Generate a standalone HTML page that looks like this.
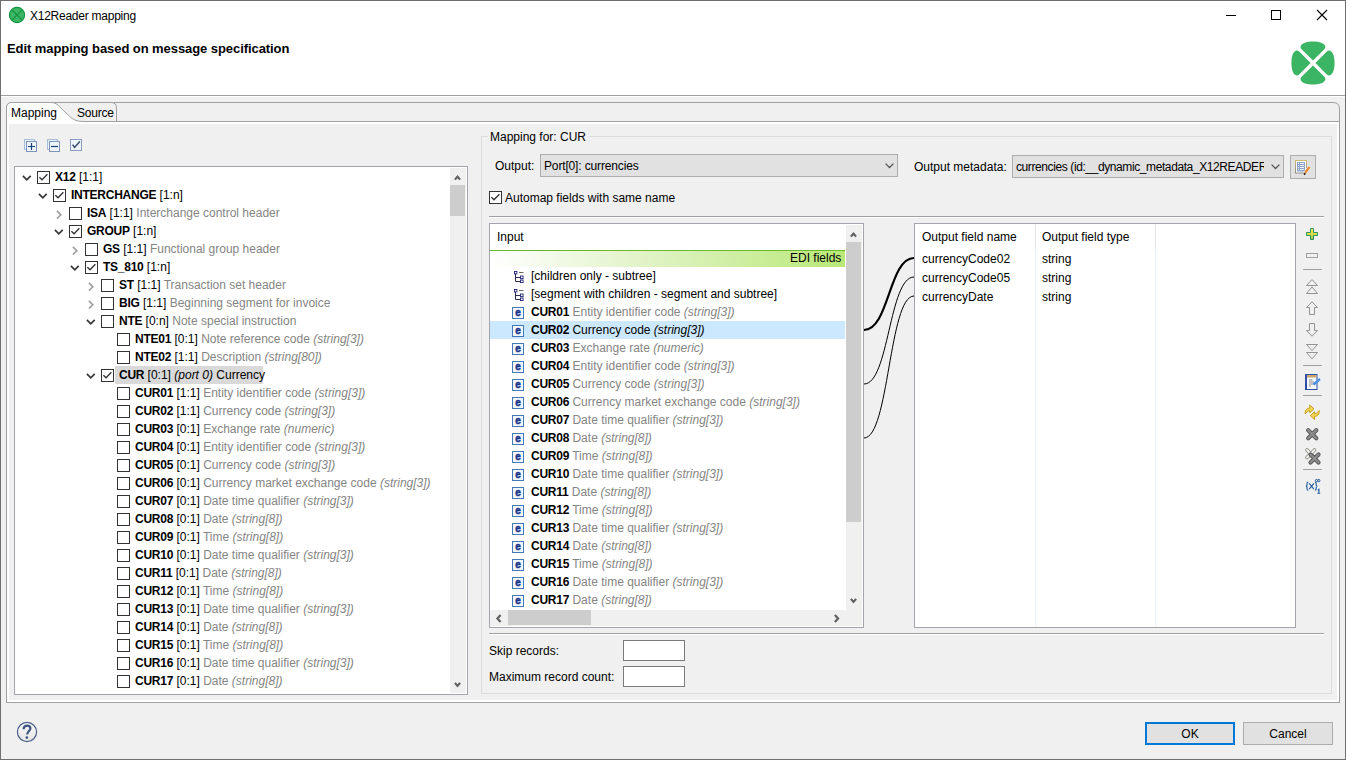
<!DOCTYPE html><html><head><meta charset="utf-8"><style>
*{margin:0;padding:0;box-sizing:border-box}
html,body{width:1346px;height:760px;overflow:hidden;background:#f0f0f0}
body{position:relative;font-family:"Liberation Sans",sans-serif;font-size:12px;color:#000}
.t{position:absolute;white-space:nowrap;line-height:18px}
.g{color:#858585}
.gi{color:#858585;font-style:italic}
b{font-weight:bold;letter-spacing:-0.25px}
svg{overflow:visible}
</style></head><body><div style="position:absolute;left:0px;top:0px;width:1346px;height:95px;background:#fff"></div>
<div style="position:absolute;left:0px;top:95px;width:1346px;height:1px;background:#a0a0a0"></div>
<div style="position:absolute;left:0px;top:96px;width:1346px;height:1px;background:#fff"></div>
<svg style="position:absolute;left:8px;top:6px;" width="18" height="18" viewBox="0 0 18 18"><circle cx="9" cy="9" r="7.6" fill="#3cb664" stroke="#14933f" stroke-width="1.2"/><path d="M4,4 L14,14 M14,4 L4,14" stroke="#14933f" stroke-width="1.1"/></svg>
<div class="t" style="left:30px;top:7px;font-size:12px;letter-spacing:-0.25px">X12Reader mapping</div>
<div style="position:absolute;left:1226px;top:15px;width:10px;height:1px;background:#000"></div>
<div style="position:absolute;left:1271px;top:10px;width:10px;height:10px;border:1px solid #000"></div>
<svg style="position:absolute;left:1316px;top:9px;" width="12" height="12" viewBox="0 0 12 12"><path d="M1,1 L11,11 M11,1 L1,11" stroke="#000" stroke-width="1.1"/></svg>
<div class="t" style="left:7px;top:40px;font-size:13px;letter-spacing:-0.07px;font-weight:bold">Edit mapping based on message specification</div>
<svg style="position:absolute;left:1291px;top:41px;" width="44" height="44" viewBox="0 0 44 44"><path d="M22,19.6 L10.6,8.2 C8.2,5.8 9.5,0.6 22,0.4 C34.5,0.6 35.8,5.8 33.4,8.2 Z" transform="rotate(0 22 22)" fill="#3bb563"/><path d="M22,19.6 L10.6,8.2 C8.2,5.8 9.5,0.6 22,0.4 C34.5,0.6 35.8,5.8 33.4,8.2 Z" transform="rotate(90 22 22)" fill="#3bb563"/><path d="M22,19.6 L10.6,8.2 C8.2,5.8 9.5,0.6 22,0.4 C34.5,0.6 35.8,5.8 33.4,8.2 Z" transform="rotate(180 22 22)" fill="#3bb563"/><path d="M22,19.6 L10.6,8.2 C8.2,5.8 9.5,0.6 22,0.4 C34.5,0.6 35.8,5.8 33.4,8.2 Z" transform="rotate(270 22 22)" fill="#3bb563"/></svg>
<div style="position:absolute;left:6px;top:121px;width:1334px;height:582px;border:1px solid #a0a0a0;border-top:none"></div>
<div style="position:absolute;left:7px;top:121px;width:1332px;height:581px;border:2px solid #fff;border-top:none"></div>
<div style="position:absolute;left:6px;top:121px;width:1334px;height:1px;background:#a0a0a0"></div>
<div style="position:absolute;left:7px;top:122px;width:1332px;height:2px;background:#fff"></div>
<svg style="position:absolute;left:110px;top:102px;" width="1230" height="21" viewBox="0 0 1230 21"><path d="M0,0.5 H1223 Q1229.5,0.5 1229.5,7 V20" fill="none" stroke="#a0a0a0"/></svg>
<svg style="position:absolute;left:6px;top:102px;" width="120" height="22" viewBox="0 0 120 22"><path d="M0.5,20 L0.5,6 Q0.5,0.5 6,0.5 L105,0.5 Q110.5,0.5 110.5,6 L110.5,20" fill="#f0f0f0" stroke="#a0a0a0"/><path d="M0.5,21 L0.5,6 Q0.5,0.5 6,0.5 L45,0.5 C48,0.5 49.5,1.2 52,3.2 L62,12.8 C66,16.8 69,19.5 76,19.5 L76,21 Z" fill="#fff"/><path d="M0.5,21 L0.5,6 Q0.5,0.5 6,0.5 L45,0.5 C48,0.5 49.5,1.2 52,3.2 L62,12.8 C66,16.8 69,19.5 78,19.5" fill="none" stroke="#a0a0a0"/></svg>
<div style="position:absolute;left:82px;top:121px;width:1258px;height:1px;background:#a0a0a0"></div>
<div style="position:absolute;left:7px;top:122px;width:1332px;height:2px;background:#fff"></div>
<div class="t" style="left:11px;top:104px;font-size:12px;">Mapping</div>
<div class="t" style="left:77px;top:104px;font-size:12px;letter-spacing:-0.2px">Source</div>
<svg style="position:absolute;left:24px;top:139px;" width="14" height="14" viewBox="0 0 14 14"><rect x="0.5" y="0.5" width="10" height="10" fill="#e6f2fb" stroke="#a9bbd6"/><rect x="2.5" y="2.5" width="10" height="10" fill="#eef6fc" stroke="#7f93b8"/><path d="M4,7.5 H11 M7.5,4 V11" stroke="#15407a" stroke-width="1.2"/></svg>
<svg style="position:absolute;left:47px;top:139px;" width="14" height="14" viewBox="0 0 14 14"><rect x="0.5" y="0.5" width="10" height="10" fill="#e6f2fb" stroke="#a9bbd6"/><rect x="2.5" y="2.5" width="10" height="10" fill="#eef6fc" stroke="#7f93b8"/><path d="M4,7.5 H11" stroke="#15407a" stroke-width="1.2"/></svg>
<svg style="position:absolute;left:70px;top:139px;" width="13" height="13" viewBox="0 0 13 13"><rect x="0.5" y="0.5" width="11" height="11" fill="#eef6fc" stroke="#8a9cbd"/><path d="M2.6,5.6 L4.6,8.4 L9.8,2.6" fill="none" stroke="#34496e" stroke-width="1.5"/></svg>
<div style="position:absolute;left:14px;top:166px;width:454px;height:529px;background:#fff;border:1px solid #a4a4ac"></div>
<div style="position:absolute;left:450px;top:168px;width:16px;height:525px;background:#f0f0f0"></div>
<div style="position:absolute;left:450px;top:185px;width:15px;height:31px;background:#cdcdcd"></div>
<svg style="position:absolute;left:454px;top:174px;" width="7" height="7" viewBox="0 0 7 7"><path d="M0.9,5.6 L3.5,2.6 L6.1,5.6" fill="none" stroke="#606060" stroke-width="2.2"/></svg>
<svg style="position:absolute;left:454px;top:682px;" width="7" height="7" viewBox="0 0 7 7"><path d="M0.9,0.9 L3.5,3.9 L6.1,0.9" fill="none" stroke="#606060" stroke-width="2.2"/></svg>
<svg style="position:absolute;left:22px;top:175px;" width="10" height="7" viewBox="0 0 10 7"><path d="M0.9,0.9 L4.8,4.8 L8.7,0.9" fill="none" stroke="#3a3a3a" stroke-width="1.8"/></svg>
<svg style="position:absolute;left:37px;top:171px;" width="13" height="13" viewBox="0 0 13 13"><rect x="0.5" y="0.5" width="12" height="12" fill="#fff" stroke="#333" /><path d="M2.4,6.2 L5,8.8 L10.4,3.2" fill="none" stroke="#333" stroke-width="1.3"/></svg>
<div class="t" style="left:55px;top:168px;font-size:12px;"><b>X12</b> [1:1]</div>
<svg style="position:absolute;left:38px;top:193px;" width="10" height="7" viewBox="0 0 10 7"><path d="M0.9,0.9 L4.8,4.8 L8.7,0.9" fill="none" stroke="#3a3a3a" stroke-width="1.8"/></svg>
<svg style="position:absolute;left:53px;top:189px;" width="13" height="13" viewBox="0 0 13 13"><rect x="0.5" y="0.5" width="12" height="12" fill="#fff" stroke="#333" /><path d="M2.4,6.2 L5,8.8 L10.4,3.2" fill="none" stroke="#333" stroke-width="1.3"/></svg>
<div class="t" style="left:71px;top:186px;font-size:12px;"><b>INTERCHANGE</b> [1:n]</div>
<svg style="position:absolute;left:56px;top:210px;" width="7" height="10" viewBox="0 0 7 10"><path d="M0.9,0.9 L4.8,4.8 L0.9,8.7" fill="none" stroke="#a6a6a6" stroke-width="1.8"/></svg>
<svg style="position:absolute;left:69px;top:207px;" width="13" height="13" viewBox="0 0 13 13"><rect x="0.5" y="0.5" width="12" height="12" fill="#fff" stroke="#333" /></svg>
<div class="t" style="left:87px;top:204px;font-size:12px;"><b>ISA</b> [1:1] <span class="g">Interchange control header</span></div>
<svg style="position:absolute;left:54px;top:229px;" width="10" height="7" viewBox="0 0 10 7"><path d="M0.9,0.9 L4.8,4.8 L8.7,0.9" fill="none" stroke="#3a3a3a" stroke-width="1.8"/></svg>
<svg style="position:absolute;left:69px;top:225px;" width="13" height="13" viewBox="0 0 13 13"><rect x="0.5" y="0.5" width="12" height="12" fill="#fff" stroke="#333" /><path d="M2.4,6.2 L5,8.8 L10.4,3.2" fill="none" stroke="#333" stroke-width="1.3"/></svg>
<div class="t" style="left:87px;top:222px;font-size:12px;"><b>GROUP</b> [1:n]</div>
<svg style="position:absolute;left:72px;top:246px;" width="7" height="10" viewBox="0 0 7 10"><path d="M0.9,0.9 L4.8,4.8 L0.9,8.7" fill="none" stroke="#a6a6a6" stroke-width="1.8"/></svg>
<svg style="position:absolute;left:85px;top:243px;" width="13" height="13" viewBox="0 0 13 13"><rect x="0.5" y="0.5" width="12" height="12" fill="#fff" stroke="#333" /></svg>
<div class="t" style="left:103px;top:240px;font-size:12px;"><b>GS</b> [1:1] <span class="g">Functional group header</span></div>
<svg style="position:absolute;left:70px;top:265px;" width="10" height="7" viewBox="0 0 10 7"><path d="M0.9,0.9 L4.8,4.8 L8.7,0.9" fill="none" stroke="#3a3a3a" stroke-width="1.8"/></svg>
<svg style="position:absolute;left:85px;top:261px;" width="13" height="13" viewBox="0 0 13 13"><rect x="0.5" y="0.5" width="12" height="12" fill="#fff" stroke="#333" /><path d="M2.4,6.2 L5,8.8 L10.4,3.2" fill="none" stroke="#333" stroke-width="1.3"/></svg>
<div class="t" style="left:103px;top:258px;font-size:12px;"><b>TS_810</b> [1:n]</div>
<svg style="position:absolute;left:88px;top:282px;" width="7" height="10" viewBox="0 0 7 10"><path d="M0.9,0.9 L4.8,4.8 L0.9,8.7" fill="none" stroke="#a6a6a6" stroke-width="1.8"/></svg>
<svg style="position:absolute;left:101px;top:279px;" width="13" height="13" viewBox="0 0 13 13"><rect x="0.5" y="0.5" width="12" height="12" fill="#fff" stroke="#333" /></svg>
<div class="t" style="left:119px;top:276px;font-size:12px;"><b>ST</b> [1:1] <span class="g">Transaction set header</span></div>
<svg style="position:absolute;left:88px;top:300px;" width="7" height="10" viewBox="0 0 7 10"><path d="M0.9,0.9 L4.8,4.8 L0.9,8.7" fill="none" stroke="#a6a6a6" stroke-width="1.8"/></svg>
<svg style="position:absolute;left:101px;top:297px;" width="13" height="13" viewBox="0 0 13 13"><rect x="0.5" y="0.5" width="12" height="12" fill="#fff" stroke="#333" /></svg>
<div class="t" style="left:119px;top:294px;font-size:12px;"><b>BIG</b> [1:1] <span class="g">Beginning segment for invoice</span></div>
<svg style="position:absolute;left:86px;top:319px;" width="10" height="7" viewBox="0 0 10 7"><path d="M0.9,0.9 L4.8,4.8 L8.7,0.9" fill="none" stroke="#3a3a3a" stroke-width="1.8"/></svg>
<svg style="position:absolute;left:101px;top:315px;" width="13" height="13" viewBox="0 0 13 13"><rect x="0.5" y="0.5" width="12" height="12" fill="#fff" stroke="#333" /></svg>
<div class="t" style="left:119px;top:312px;font-size:12px;"><b>NTE</b> [0:n] <span class="g">Note special instruction</span></div>
<svg style="position:absolute;left:117px;top:333px;" width="13" height="13" viewBox="0 0 13 13"><rect x="0.5" y="0.5" width="12" height="12" fill="#fff" stroke="#333" /></svg>
<div class="t" style="left:135px;top:330px;font-size:12px;"><b>NTE01</b> [0:1] <span class="g">Note reference code <i>(string[3])</i></span></div>
<svg style="position:absolute;left:117px;top:351px;" width="13" height="13" viewBox="0 0 13 13"><rect x="0.5" y="0.5" width="12" height="12" fill="#fff" stroke="#333" /></svg>
<div class="t" style="left:135px;top:348px;font-size:12px;"><b>NTE02</b> [1:1] <span class="g">Description <i>(string[80])</i></span></div>
<div style="position:absolute;left:115px;top:366px;width:148px;height:18px;background:#d9d9d9"></div>
<svg style="position:absolute;left:86px;top:373px;" width="10" height="7" viewBox="0 0 10 7"><path d="M0.9,0.9 L4.8,4.8 L8.7,0.9" fill="none" stroke="#3a3a3a" stroke-width="1.8"/></svg>
<svg style="position:absolute;left:101px;top:369px;" width="13" height="13" viewBox="0 0 13 13"><rect x="0.5" y="0.5" width="12" height="12" fill="#fff" stroke="#333" /><path d="M2.4,6.2 L5,8.8 L10.4,3.2" fill="none" stroke="#333" stroke-width="1.3"/></svg>
<div class="t" style="left:119px;top:366px;font-size:12px;"><b>CUR</b> [0:1] <i>(port 0)</i> Currency</div>
<svg style="position:absolute;left:117px;top:387px;" width="13" height="13" viewBox="0 0 13 13"><rect x="0.5" y="0.5" width="12" height="12" fill="#fff" stroke="#333" /></svg>
<div class="t" style="left:135px;top:384px;font-size:12px;"><b>CUR01</b> [1:1] <span class="g">Entity identifier code <i>(string[3])</i></span></div>
<svg style="position:absolute;left:117px;top:405px;" width="13" height="13" viewBox="0 0 13 13"><rect x="0.5" y="0.5" width="12" height="12" fill="#fff" stroke="#333" /></svg>
<div class="t" style="left:135px;top:402px;font-size:12px;"><b>CUR02</b> [1:1] <span class="g">Currency code <i>(string[3])</i></span></div>
<svg style="position:absolute;left:117px;top:423px;" width="13" height="13" viewBox="0 0 13 13"><rect x="0.5" y="0.5" width="12" height="12" fill="#fff" stroke="#333" /></svg>
<div class="t" style="left:135px;top:420px;font-size:12px;"><b>CUR03</b> [0:1] <span class="g">Exchange rate <i>(numeric)</i></span></div>
<svg style="position:absolute;left:117px;top:441px;" width="13" height="13" viewBox="0 0 13 13"><rect x="0.5" y="0.5" width="12" height="12" fill="#fff" stroke="#333" /></svg>
<div class="t" style="left:135px;top:438px;font-size:12px;"><b>CUR04</b> [0:1] <span class="g">Entity identifier code <i>(string[3])</i></span></div>
<svg style="position:absolute;left:117px;top:459px;" width="13" height="13" viewBox="0 0 13 13"><rect x="0.5" y="0.5" width="12" height="12" fill="#fff" stroke="#333" /></svg>
<div class="t" style="left:135px;top:456px;font-size:12px;"><b>CUR05</b> [0:1] <span class="g">Currency code <i>(string[3])</i></span></div>
<svg style="position:absolute;left:117px;top:477px;" width="13" height="13" viewBox="0 0 13 13"><rect x="0.5" y="0.5" width="12" height="12" fill="#fff" stroke="#333" /></svg>
<div class="t" style="left:135px;top:474px;font-size:12px;"><b>CUR06</b> [0:1] <span class="g">Currency market exchange code <i>(string[3])</i></span></div>
<svg style="position:absolute;left:117px;top:495px;" width="13" height="13" viewBox="0 0 13 13"><rect x="0.5" y="0.5" width="12" height="12" fill="#fff" stroke="#333" /></svg>
<div class="t" style="left:135px;top:492px;font-size:12px;"><b>CUR07</b> [0:1] <span class="g">Date time qualifier <i>(string[3])</i></span></div>
<svg style="position:absolute;left:117px;top:513px;" width="13" height="13" viewBox="0 0 13 13"><rect x="0.5" y="0.5" width="12" height="12" fill="#fff" stroke="#333" /></svg>
<div class="t" style="left:135px;top:510px;font-size:12px;"><b>CUR08</b> [0:1] <span class="g">Date <i>(string[8])</i></span></div>
<svg style="position:absolute;left:117px;top:531px;" width="13" height="13" viewBox="0 0 13 13"><rect x="0.5" y="0.5" width="12" height="12" fill="#fff" stroke="#333" /></svg>
<div class="t" style="left:135px;top:528px;font-size:12px;"><b>CUR09</b> [0:1] <span class="g">Time <i>(string[8])</i></span></div>
<svg style="position:absolute;left:117px;top:549px;" width="13" height="13" viewBox="0 0 13 13"><rect x="0.5" y="0.5" width="12" height="12" fill="#fff" stroke="#333" /></svg>
<div class="t" style="left:135px;top:546px;font-size:12px;"><b>CUR10</b> [0:1] <span class="g">Date time qualifier <i>(string[3])</i></span></div>
<svg style="position:absolute;left:117px;top:567px;" width="13" height="13" viewBox="0 0 13 13"><rect x="0.5" y="0.5" width="12" height="12" fill="#fff" stroke="#333" /></svg>
<div class="t" style="left:135px;top:564px;font-size:12px;"><b>CUR11</b> [0:1] <span class="g">Date <i>(string[8])</i></span></div>
<svg style="position:absolute;left:117px;top:585px;" width="13" height="13" viewBox="0 0 13 13"><rect x="0.5" y="0.5" width="12" height="12" fill="#fff" stroke="#333" /></svg>
<div class="t" style="left:135px;top:582px;font-size:12px;"><b>CUR12</b> [0:1] <span class="g">Time <i>(string[8])</i></span></div>
<svg style="position:absolute;left:117px;top:603px;" width="13" height="13" viewBox="0 0 13 13"><rect x="0.5" y="0.5" width="12" height="12" fill="#fff" stroke="#333" /></svg>
<div class="t" style="left:135px;top:600px;font-size:12px;"><b>CUR13</b> [0:1] <span class="g">Date time qualifier <i>(string[3])</i></span></div>
<svg style="position:absolute;left:117px;top:621px;" width="13" height="13" viewBox="0 0 13 13"><rect x="0.5" y="0.5" width="12" height="12" fill="#fff" stroke="#333" /></svg>
<div class="t" style="left:135px;top:618px;font-size:12px;"><b>CUR14</b> [0:1] <span class="g">Date <i>(string[8])</i></span></div>
<svg style="position:absolute;left:117px;top:639px;" width="13" height="13" viewBox="0 0 13 13"><rect x="0.5" y="0.5" width="12" height="12" fill="#fff" stroke="#333" /></svg>
<div class="t" style="left:135px;top:636px;font-size:12px;"><b>CUR15</b> [0:1] <span class="g">Time <i>(string[8])</i></span></div>
<svg style="position:absolute;left:117px;top:657px;" width="13" height="13" viewBox="0 0 13 13"><rect x="0.5" y="0.5" width="12" height="12" fill="#fff" stroke="#333" /></svg>
<div class="t" style="left:135px;top:654px;font-size:12px;"><b>CUR16</b> [0:1] <span class="g">Date time qualifier <i>(string[3])</i></span></div>
<svg style="position:absolute;left:117px;top:675px;" width="13" height="13" viewBox="0 0 13 13"><rect x="0.5" y="0.5" width="12" height="12" fill="#fff" stroke="#333" /></svg>
<div class="t" style="left:135px;top:672px;font-size:12px;"><b>CUR17</b> [0:1] <span class="g">Date <i>(string[8])</i></span></div>
<div style="position:absolute;left:481px;top:136px;width:851px;height:558px;border:1px solid #dcdcdc"></div>
<div style="position:absolute;left:488px;top:130px;width:101px;height:14px;background:#f0f0f0"></div>
<div class="t" style="left:490px;top:128px;font-size:12px;">Mapping for: CUR</div>
<div class="t" style="left:495px;top:157px;font-size:12px;">Output:</div>
<div style="position:absolute;left:540px;top:154px;width:358px;height:23px;background:#e1e1e1;border:1px solid #adadad;overflow:hidden"></div>
<div class="t" style="left:544px;top:157px;font-size:12px;width:334px;overflow:hidden;letter-spacing:-0.15px">Port[0]: currencies</div>
<svg style="position:absolute;left:885px;top:163px;" width="10" height="6" viewBox="0 0 10 6"><path d="M0.6,0.6 L4.5,4.5 L8.4,0.6" fill="none" stroke="#555" stroke-width="1.3"/></svg>
<div class="t" style="left:914px;top:158px;font-size:12px;">Output metadata:</div>
<div style="position:absolute;left:1012px;top:155px;width:272px;height:23px;background:#e1e1e1;border:1px solid #adadad;overflow:hidden"></div>
<div class="t" style="left:1016px;top:158px;font-size:12px;width:248px;overflow:hidden;letter-spacing:-0.4px">currencies (id:__dynamic_metadata_X12READER</div>
<svg style="position:absolute;left:1271px;top:164px;" width="10" height="6" viewBox="0 0 10 6"><path d="M0.6,0.6 L4.5,4.5 L8.4,0.6" fill="none" stroke="#555" stroke-width="1.3"/></svg>
<div style="position:absolute;left:1290px;top:155px;width:26px;height:24px;background:#e1e1e1;border:1px solid #adadad"></div>
<svg style="position:absolute;left:1295px;top:160px;" width="16" height="15" viewBox="0 0 16 15"><defs><linearGradient id="dg" x1="0" y1="0" x2="0" y2="1"><stop offset="0" stop-color="#cdb874"/><stop offset="1" stop-color="#8c8c84"/></linearGradient></defs><rect x="0.5" y="0.5" width="11" height="12.5" fill="#fff" stroke="url(#dg)"/><rect x="2" y="2" width="8" height="9.5" fill="#8ea3cc"/><path d="M3,3.5 H4 M5,3.5 H9 M3,5.5 H4 M5,5.5 H9 M3,7.5 H4 M5,7.5 H9 M3,9.5 H4 M5,9.5 H9" stroke="#f4f6fb" stroke-width="1"/><path d="M10,13 L14.5,7" stroke="#fff" stroke-width="3.6"/><path d="M10,13 L14.5,7" stroke="#e08a3a" stroke-width="2.4"/><circle cx="9.6" cy="14" r="0.9" fill="#111"/></svg>
<svg style="position:absolute;left:489px;top:191px;" width="13" height="13" viewBox="0 0 13 13"><rect x="0.5" y="0.5" width="12" height="12" fill="#fff" stroke="#333" /><path d="M2.4,6.2 L5,8.8 L10.4,3.2" fill="none" stroke="#333" stroke-width="1.3"/></svg>
<div class="t" style="left:505px;top:189px;font-size:12px;">Automap fields with same name</div>
<div style="position:absolute;left:489px;top:216px;width:835px;height:1px;background:#a0a0a0"></div>
<div style="position:absolute;left:489px;top:217px;width:835px;height:1px;background:#fff"></div>
<div style="position:absolute;left:489px;top:223px;width:375px;height:405px;background:#fff;border:1px solid #a4a4ac"></div>
<div class="t" style="left:497px;top:228px;font-size:12px;">Input</div>
<div style="position:absolute;left:490px;top:250px;width:355px;height:17px;background:linear-gradient(to right,#fff 0%,#e3f4cb 40%,#b9e877 100%);border-top:1px solid #6db92e"></div>
<div class="t" style="left:790px;top:249px;font-size:12px;width:51px;text-align:right">EDI fields</div>
<div style="position:absolute;left:846px;top:225px;width:16px;height:385px;background:#f0f0f0"></div>
<div style="position:absolute;left:846px;top:242px;width:15px;height:280px;background:#cdcdcd"></div>
<svg style="position:absolute;left:850px;top:231px;" width="7" height="7" viewBox="0 0 7 7"><path d="M0.9,5.6 L3.5,2.6 L6.1,5.6" fill="none" stroke="#606060" stroke-width="2.2"/></svg>
<svg style="position:absolute;left:850px;top:598px;" width="7" height="7" viewBox="0 0 7 7"><path d="M0.9,0.9 L3.5,3.9 L6.1,0.9" fill="none" stroke="#606060" stroke-width="2.2"/></svg>
<div style="position:absolute;left:490px;top:610px;width:372px;height:16px;background:#f0f0f0"></div>
<div style="position:absolute;left:508px;top:610px;width:83px;height:15px;background:#cdcdcd"></div>
<svg style="position:absolute;left:495px;top:614px;" width="7" height="9" viewBox="0 0 7 9"><path d="M5.6,0.9 L2.4,4.5 L5.6,8.1" fill="none" stroke="#606060" stroke-width="2.2"/></svg>
<svg style="position:absolute;left:834px;top:614px;" width="7" height="9" viewBox="0 0 7 9"><path d="M0.9,0.9 L4.1,4.5 L0.9,8.1" fill="none" stroke="#606060" stroke-width="2.2"/></svg>
<svg style="position:absolute;left:514px;top:271px;" width="11" height="12" viewBox="0 0 11 12"><path d="M1.5,3 V10.5 H6 M1.5,6.5 H6" fill="none" stroke="#2a2a55" stroke-width="1"/><rect x="0.5" y="0.5" width="2.4" height="2.4" fill="#fff" stroke="#23237a" stroke-width="0.9"/><rect x="6.5" y="5" width="2.6" height="2.6" fill="#fff" stroke="#23237a" stroke-width="0.9"/><rect x="6.5" y="9" width="2.6" height="2.6" fill="#fff" stroke="#23237a" stroke-width="0.9"/><path d="M5,1.5 H9.5" stroke="#555" stroke-width="0.9"/></svg>
<div class="t" style="left:531px;top:267px;font-size:12px;">[children only - subtree]</div>
<svg style="position:absolute;left:514px;top:289px;" width="11" height="12" viewBox="0 0 11 12"><path d="M1.5,3 V10.5 H6 M1.5,6.5 H6" fill="none" stroke="#2a2a55" stroke-width="1"/><rect x="0.5" y="0.5" width="2.4" height="2.4" fill="#fff" stroke="#23237a" stroke-width="0.9"/><rect x="6.5" y="5" width="2.6" height="2.6" fill="#fff" stroke="#23237a" stroke-width="0.9"/><rect x="6.5" y="9" width="2.6" height="2.6" fill="#fff" stroke="#23237a" stroke-width="0.9"/><path d="M5,1.5 H9.5" stroke="#555" stroke-width="0.9"/></svg>
<div class="t" style="left:531px;top:285px;font-size:12px;">[segment with children - segment and subtree]</div>
<svg style="position:absolute;left:512px;top:307px;" width="12" height="12" viewBox="0 0 12 12"><rect x="0.5" y="0.5" width="11" height="11" fill="#f2f7fd" stroke="#4479b8"/><text x="6.1" y="8.9" text-anchor="middle" font-family="Liberation Sans" font-weight="700" font-size="10" fill="#18398a" stroke="#18398a" stroke-width="0.5">e</text></svg>
<div class="t" style="left:531px;top:303px;font-size:12px;"><b>CUR01</b> <span class="g">Entity identifier code <i>(string[3])</i></span></div>
<div style="position:absolute;left:490px;top:321px;width:355px;height:18px;background:#cce8ff"></div>
<svg style="position:absolute;left:512px;top:325px;" width="12" height="12" viewBox="0 0 12 12"><rect x="0.5" y="0.5" width="11" height="11" fill="#f2f7fd" stroke="#4479b8"/><text x="6.1" y="8.9" text-anchor="middle" font-family="Liberation Sans" font-weight="700" font-size="10" fill="#18398a" stroke="#18398a" stroke-width="0.5">e</text></svg>
<div class="t" style="left:531px;top:321px;font-size:12px;"><b>CUR02</b> <span>Currency code <i>(string[3])</i></span></div>
<svg style="position:absolute;left:512px;top:343px;" width="12" height="12" viewBox="0 0 12 12"><rect x="0.5" y="0.5" width="11" height="11" fill="#f2f7fd" stroke="#4479b8"/><text x="6.1" y="8.9" text-anchor="middle" font-family="Liberation Sans" font-weight="700" font-size="10" fill="#18398a" stroke="#18398a" stroke-width="0.5">e</text></svg>
<div class="t" style="left:531px;top:339px;font-size:12px;"><b>CUR03</b> <span class="g">Exchange rate <i>(numeric)</i></span></div>
<svg style="position:absolute;left:512px;top:361px;" width="12" height="12" viewBox="0 0 12 12"><rect x="0.5" y="0.5" width="11" height="11" fill="#f2f7fd" stroke="#4479b8"/><text x="6.1" y="8.9" text-anchor="middle" font-family="Liberation Sans" font-weight="700" font-size="10" fill="#18398a" stroke="#18398a" stroke-width="0.5">e</text></svg>
<div class="t" style="left:531px;top:357px;font-size:12px;"><b>CUR04</b> <span class="g">Entity identifier code <i>(string[3])</i></span></div>
<svg style="position:absolute;left:512px;top:379px;" width="12" height="12" viewBox="0 0 12 12"><rect x="0.5" y="0.5" width="11" height="11" fill="#f2f7fd" stroke="#4479b8"/><text x="6.1" y="8.9" text-anchor="middle" font-family="Liberation Sans" font-weight="700" font-size="10" fill="#18398a" stroke="#18398a" stroke-width="0.5">e</text></svg>
<div class="t" style="left:531px;top:375px;font-size:12px;"><b>CUR05</b> <span class="g">Currency code <i>(string[3])</i></span></div>
<svg style="position:absolute;left:512px;top:397px;" width="12" height="12" viewBox="0 0 12 12"><rect x="0.5" y="0.5" width="11" height="11" fill="#f2f7fd" stroke="#4479b8"/><text x="6.1" y="8.9" text-anchor="middle" font-family="Liberation Sans" font-weight="700" font-size="10" fill="#18398a" stroke="#18398a" stroke-width="0.5">e</text></svg>
<div class="t" style="left:531px;top:393px;font-size:12px;"><b>CUR06</b> <span class="g">Currency market exchange code <i>(string[3])</i></span></div>
<svg style="position:absolute;left:512px;top:415px;" width="12" height="12" viewBox="0 0 12 12"><rect x="0.5" y="0.5" width="11" height="11" fill="#f2f7fd" stroke="#4479b8"/><text x="6.1" y="8.9" text-anchor="middle" font-family="Liberation Sans" font-weight="700" font-size="10" fill="#18398a" stroke="#18398a" stroke-width="0.5">e</text></svg>
<div class="t" style="left:531px;top:411px;font-size:12px;"><b>CUR07</b> <span class="g">Date time qualifier <i>(string[3])</i></span></div>
<svg style="position:absolute;left:512px;top:433px;" width="12" height="12" viewBox="0 0 12 12"><rect x="0.5" y="0.5" width="11" height="11" fill="#f2f7fd" stroke="#4479b8"/><text x="6.1" y="8.9" text-anchor="middle" font-family="Liberation Sans" font-weight="700" font-size="10" fill="#18398a" stroke="#18398a" stroke-width="0.5">e</text></svg>
<div class="t" style="left:531px;top:429px;font-size:12px;"><b>CUR08</b> <span class="g">Date <i>(string[8])</i></span></div>
<svg style="position:absolute;left:512px;top:451px;" width="12" height="12" viewBox="0 0 12 12"><rect x="0.5" y="0.5" width="11" height="11" fill="#f2f7fd" stroke="#4479b8"/><text x="6.1" y="8.9" text-anchor="middle" font-family="Liberation Sans" font-weight="700" font-size="10" fill="#18398a" stroke="#18398a" stroke-width="0.5">e</text></svg>
<div class="t" style="left:531px;top:447px;font-size:12px;"><b>CUR09</b> <span class="g">Time <i>(string[8])</i></span></div>
<svg style="position:absolute;left:512px;top:469px;" width="12" height="12" viewBox="0 0 12 12"><rect x="0.5" y="0.5" width="11" height="11" fill="#f2f7fd" stroke="#4479b8"/><text x="6.1" y="8.9" text-anchor="middle" font-family="Liberation Sans" font-weight="700" font-size="10" fill="#18398a" stroke="#18398a" stroke-width="0.5">e</text></svg>
<div class="t" style="left:531px;top:465px;font-size:12px;"><b>CUR10</b> <span class="g">Date time qualifier <i>(string[3])</i></span></div>
<svg style="position:absolute;left:512px;top:487px;" width="12" height="12" viewBox="0 0 12 12"><rect x="0.5" y="0.5" width="11" height="11" fill="#f2f7fd" stroke="#4479b8"/><text x="6.1" y="8.9" text-anchor="middle" font-family="Liberation Sans" font-weight="700" font-size="10" fill="#18398a" stroke="#18398a" stroke-width="0.5">e</text></svg>
<div class="t" style="left:531px;top:483px;font-size:12px;"><b>CUR11</b> <span class="g">Date <i>(string[8])</i></span></div>
<svg style="position:absolute;left:512px;top:505px;" width="12" height="12" viewBox="0 0 12 12"><rect x="0.5" y="0.5" width="11" height="11" fill="#f2f7fd" stroke="#4479b8"/><text x="6.1" y="8.9" text-anchor="middle" font-family="Liberation Sans" font-weight="700" font-size="10" fill="#18398a" stroke="#18398a" stroke-width="0.5">e</text></svg>
<div class="t" style="left:531px;top:501px;font-size:12px;"><b>CUR12</b> <span class="g">Time <i>(string[8])</i></span></div>
<svg style="position:absolute;left:512px;top:523px;" width="12" height="12" viewBox="0 0 12 12"><rect x="0.5" y="0.5" width="11" height="11" fill="#f2f7fd" stroke="#4479b8"/><text x="6.1" y="8.9" text-anchor="middle" font-family="Liberation Sans" font-weight="700" font-size="10" fill="#18398a" stroke="#18398a" stroke-width="0.5">e</text></svg>
<div class="t" style="left:531px;top:519px;font-size:12px;"><b>CUR13</b> <span class="g">Date time qualifier <i>(string[3])</i></span></div>
<svg style="position:absolute;left:512px;top:541px;" width="12" height="12" viewBox="0 0 12 12"><rect x="0.5" y="0.5" width="11" height="11" fill="#f2f7fd" stroke="#4479b8"/><text x="6.1" y="8.9" text-anchor="middle" font-family="Liberation Sans" font-weight="700" font-size="10" fill="#18398a" stroke="#18398a" stroke-width="0.5">e</text></svg>
<div class="t" style="left:531px;top:537px;font-size:12px;"><b>CUR14</b> <span class="g">Date <i>(string[8])</i></span></div>
<svg style="position:absolute;left:512px;top:559px;" width="12" height="12" viewBox="0 0 12 12"><rect x="0.5" y="0.5" width="11" height="11" fill="#f2f7fd" stroke="#4479b8"/><text x="6.1" y="8.9" text-anchor="middle" font-family="Liberation Sans" font-weight="700" font-size="10" fill="#18398a" stroke="#18398a" stroke-width="0.5">e</text></svg>
<div class="t" style="left:531px;top:555px;font-size:12px;"><b>CUR15</b> <span class="g">Time <i>(string[8])</i></span></div>
<svg style="position:absolute;left:512px;top:577px;" width="12" height="12" viewBox="0 0 12 12"><rect x="0.5" y="0.5" width="11" height="11" fill="#f2f7fd" stroke="#4479b8"/><text x="6.1" y="8.9" text-anchor="middle" font-family="Liberation Sans" font-weight="700" font-size="10" fill="#18398a" stroke="#18398a" stroke-width="0.5">e</text></svg>
<div class="t" style="left:531px;top:573px;font-size:12px;"><b>CUR16</b> <span class="g">Date time qualifier <i>(string[3])</i></span></div>
<svg style="position:absolute;left:512px;top:595px;" width="12" height="12" viewBox="0 0 12 12"><rect x="0.5" y="0.5" width="11" height="11" fill="#f2f7fd" stroke="#4479b8"/><text x="6.1" y="8.9" text-anchor="middle" font-family="Liberation Sans" font-weight="700" font-size="10" fill="#18398a" stroke="#18398a" stroke-width="0.5">e</text></svg>
<div class="t" style="left:531px;top:591px;font-size:12px;"><b>CUR17</b> <span class="g">Date <i>(string[8])</i></span></div>
<svg style="position:absolute;left:863px;top:250px;" width="52" height="200" viewBox="0 0 52 200"><path d="M1,80 C26,80 26,8 51,8" fill="none" stroke="#000" stroke-width="2.2"/><path d="M1,134 C26,134 26,27 51,27" fill="none" stroke="#000" stroke-width="1"/><path d="M1,188 C26,188 26,46 51,46" fill="none" stroke="#000" stroke-width="1"/></svg>
<div style="position:absolute;left:914px;top:223px;width:382px;height:405px;background:#fff;border:1px solid #a4a4ac"></div>
<div style="position:absolute;left:1035px;top:224px;width:1px;height:26px;background:#e5e5e5"></div>
<div style="position:absolute;left:1155px;top:224px;width:1px;height:26px;background:#e5e5e5"></div>
<div style="position:absolute;left:1035px;top:250px;width:1px;height:377px;background:#eaf2fb"></div>
<div style="position:absolute;left:1155px;top:250px;width:1px;height:377px;background:#eaf2fb"></div>
<div class="t" style="left:922px;top:228px;font-size:12px;">Output field name</div>
<div class="t" style="left:1042px;top:228px;font-size:12px;">Output field type</div>
<div class="t" style="left:922px;top:250px;font-size:12px;">currencyCode02</div>
<div class="t" style="left:1042px;top:250px;font-size:12px;">string</div>
<div class="t" style="left:922px;top:269px;font-size:12px;">currencyCode05</div>
<div class="t" style="left:1042px;top:269px;font-size:12px;">string</div>
<div class="t" style="left:922px;top:288px;font-size:12px;">currencyDate</div>
<div class="t" style="left:1042px;top:288px;font-size:12px;">string</div>
<svg style="position:absolute;left:1306px;top:228px;" width="12" height="12" viewBox="0 0 12 12"><defs><linearGradient id="pg" x1="0" y1="0" x2="0" y2="1"><stop offset="0" stop-color="#f4f050"/><stop offset="0.5" stop-color="#d6e04a"/><stop offset="1" stop-color="#8fbf48"/></linearGradient></defs><path d="M4.5,0.5 H7.5 V4.5 H11.5 V7.5 H7.5 V11.5 H4.5 V7.5 H0.5 V4.5 H4.5 Z" fill="url(#pg)" stroke="#34905a" stroke-linejoin="miter"/></svg>
<div style="position:absolute;left:1306px;top:253px;width:12px;height:5px;border:1px solid #a0a0a0"></div>
<div style="position:absolute;left:1303px;top:269px;width:19px;height:1px;background:#a0a0a0"></div>
<svg style="position:absolute;left:1306px;top:279px;" width="12" height="16" viewBox="0 0 12 16"><path d="M0.5,6.5 L6,0.6 L11.5,6.5 Z M0.5,14.5 L6,7.9 L11.5,14.5 Z" fill="none" stroke="#929292"/></svg>
<svg style="position:absolute;left:1306px;top:301px;" width="12" height="14" viewBox="0 0 12 14"><path d="M6,0.8 L11.5,6.5 H8.5 V13.5 H3.5 V6.5 H0.5 Z" fill="none" stroke="#929292"/></svg>
<svg style="position:absolute;left:1306px;top:323px;" width="12" height="14" viewBox="0 0 12 14"><path d="M6,13.2 L11.5,7.5 H8.5 V0.5 H3.5 V7.5 H0.5 Z" fill="none" stroke="#929292"/></svg>
<svg style="position:absolute;left:1306px;top:344px;" width="12" height="16" viewBox="0 0 12 16"><path d="M0.5,0.5 L6,6.6 L11.5,0.5 Z M0.5,8.5 L6,14.9 L11.5,8.5 Z" fill="none" stroke="#929292"/></svg>
<div style="position:absolute;left:1303px;top:365px;width:19px;height:1px;background:#a0a0a0"></div>
<svg style="position:absolute;left:1305px;top:374px;" width="16" height="16" viewBox="0 0 16 16"><rect x="0.5" y="0.5" width="11.5" height="15" fill="#f4f7fb" stroke="#2f4fa6"/><rect x="0.5" y="0.5" width="1.5" height="15" fill="#3150a8"/><rect x="2" y="1" width="9.5" height="2.5" fill="#c9a66a"/><path d="M4,6 H7.5 M4,8 H9 M4,10 H9 M4,12 H6" stroke="#8c8c8c" stroke-width="1"/><path d="M8.5,10.5 L15,5" stroke="#4a8fe0" stroke-width="2.4"/></svg>
<div style="position:absolute;left:1303px;top:395px;width:19px;height:1px;background:#a0a0a0"></div>
<svg style="position:absolute;left:1304px;top:404px;" width="16" height="16" viewBox="0 0 16 16"><path d="M1,10 L1.5,6.5 L3.5,4.5 L5.8,4 L5.8,1 L10,4.8 L5.8,8.8 L5.8,6.8 L4,7 Z" fill="#f6d45a" stroke="#c39a12" stroke-width="0.9" stroke-linejoin="round"/><path d="M15.3,6.5 L14.8,10 L12.8,12 L10.5,12.5 L10.5,15.5 L6.3,11.7 L10.5,7.7 L10.5,9.7 L12.3,9.5 Z" fill="#f6d45a" stroke="#c39a12" stroke-width="0.9" stroke-linejoin="round"/></svg>
<svg style="position:absolute;left:1306px;top:428px;" width="13" height="13" viewBox="0 0 13 13"><path d="M2.2,2.2 L10.3,10.3 M10.3,2.2 L2.2,10.3" stroke="#555" stroke-width="4.2" stroke-linecap="round"/><path d="M2.2,2.2 L10.3,10.3 M10.3,2.2 L2.2,10.3" stroke="#8c8c8c" stroke-width="2.4" stroke-linecap="round"/></svg>
<svg style="position:absolute;left:1305px;top:448px;" width="16" height="16" viewBox="0 0 16 16"><path d="M2,2 L9.5,9.5 M9.5,2 L2,9.5" stroke="#8a8a7a" stroke-width="3.6" stroke-linecap="round"/><path d="M2,2 L9.5,9.5 M9.5,2 L2,9.5" stroke="#f0f0f0" stroke-width="2" stroke-linecap="round"/><path d="M5.5,6.5 L13.5,14.5 M13.5,6.5 L5.5,14.5" stroke="#555" stroke-width="4.2" stroke-linecap="round"/><path d="M5.5,6.5 L13.5,14.5 M13.5,6.5 L5.5,14.5" stroke="#8c8c8c" stroke-width="2.4" stroke-linecap="round"/></svg>
<div style="position:absolute;left:1303px;top:469px;width:19px;height:1px;background:#a0a0a0"></div>
<svg style="position:absolute;left:1304px;top:478px;" width="17" height="17" viewBox="0 0 17 17"><g fill="none" stroke="#1f5aa0" stroke-width="1.1"><path d="M4.3,4 C3.3,4 3,4.6 3,5.6 V7 C3,7.8 2.6,8.2 1.8,8.2 C2.6,8.2 3,8.6 3,9.4 V10.8 C3,11.8 3.3,12.4 4.3,12.4"/><path d="M10.9,4 C11.9,4 12.2,4.6 12.2,5.6 V7 C12.2,7.8 12.6,8.2 13.4,8.2 C12.6,8.2 12.2,8.6 12.2,9.4 V10.8 C12.2,11.8 11.9,12.4 10.9,12.4"/><path d="M5.2,5.4 L9.9,11.2 M9.9,5.4 L5.2,11.2"/><circle cx="12.5" cy="2.6" r="1.15" stroke-width="1"/><circle cx="14.8" cy="2.6" r="1.15" stroke-width="1"/><path d="M13.8,12.2 L14.9,11.4 V15.2 M13.3,15.3 H16.2"/></g></svg>
<div style="position:absolute;left:489px;top:633px;width:835px;height:1px;background:#a0a0a0"></div>
<div style="position:absolute;left:489px;top:634px;width:835px;height:1px;background:#fff"></div>
<div class="t" style="left:489px;top:642px;font-size:12px;">Skip records:</div>
<div style="position:absolute;left:623px;top:640px;width:62px;height:21px;background:#fff;border:1px solid #7a7a7a"></div>
<div class="t" style="left:489px;top:668px;font-size:12px;">Maximum record count:</div>
<div style="position:absolute;left:623px;top:666px;width:62px;height:21px;background:#fff;border:1px solid #7a7a7a"></div>
<svg style="position:absolute;left:16px;top:721px;" width="22" height="22" viewBox="0 0 22 22"><defs><linearGradient id="hg" x1="0" y1="0" x2="0" y2="1"><stop offset="0" stop-color="#fafafa"/><stop offset="1" stop-color="#e4e4e4"/></linearGradient></defs><circle cx="11" cy="11" r="9.6" fill="url(#hg)" stroke="#4b6088" stroke-width="1.2"/><path d="M7.6,8.2 C7.6,5.6 9.2,4.6 11.1,4.6 C13.2,4.6 14.4,5.8 14.4,7.5 C14.4,9.7 11.1,10.4 11.1,13.6" fill="none" stroke="#3f5683" stroke-width="2.2"/><circle cx="10.9" cy="16.6" r="1.3" fill="#3f5683"/></svg>
<div style="position:absolute;left:1145px;top:722px;width:90px;height:23px;background:#e1e1e1;border:2px solid #0078d7"></div>
<div class="t" style="left:1145px;top:725px;font-size:12px;width:90px;text-align:center">OK</div>
<div style="position:absolute;left:1243px;top:722px;width:90px;height:23px;background:#e1e1e1;border:1px solid #adadad"></div>
<div class="t" style="left:1243px;top:725px;font-size:12px;width:90px;text-align:center">Cancel</div>
<div style="position:absolute;left:0px;top:0px;width:1346px;height:760px;border:1px solid #6f6f6f"></div></body></html>
